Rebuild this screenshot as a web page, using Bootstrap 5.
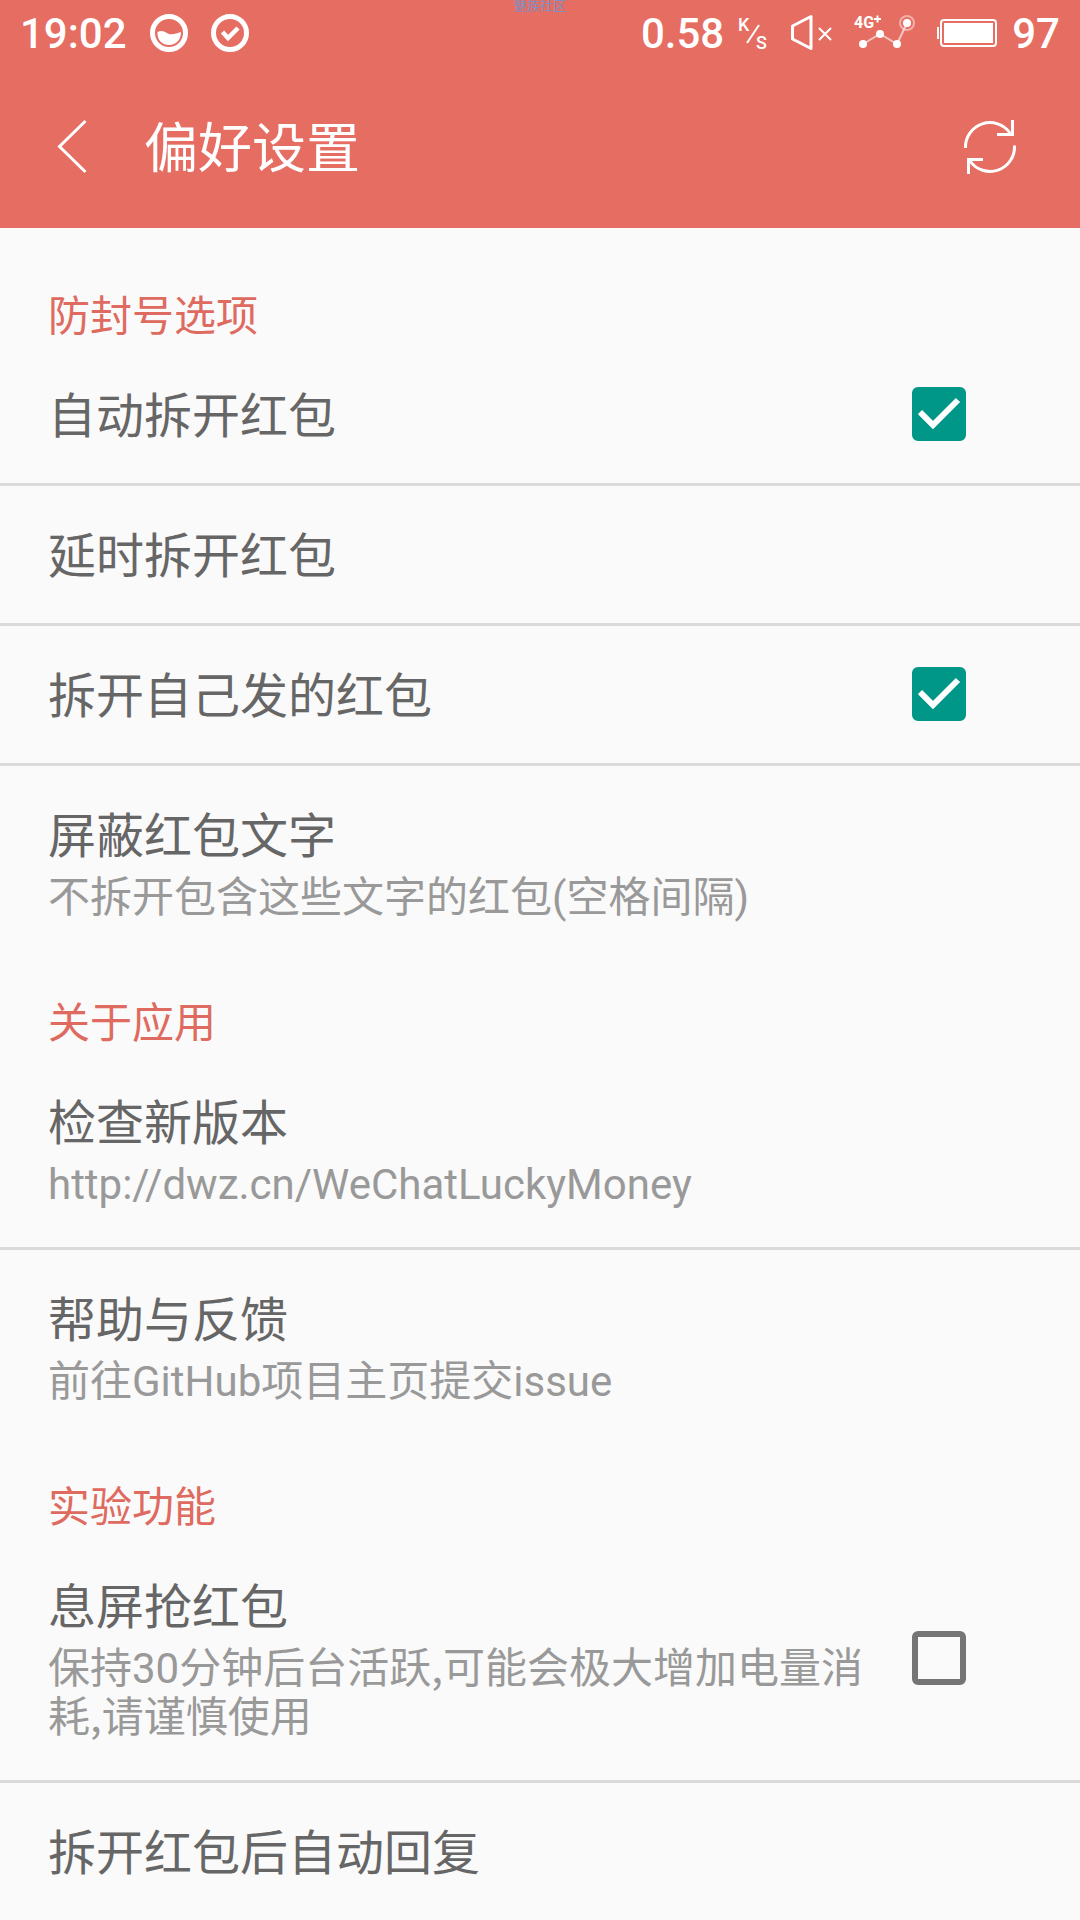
<!DOCTYPE html>
<html lang="zh-CN">
<head>
<meta charset="utf-8">
<meta name="viewport" content="width=device-width, initial-scale=1">
<title>偏好设置</title>
<link href="https://cdn.jsdelivr.net/npm/bootstrap@5.3.0/dist/css/bootstrap.min.css" rel="stylesheet">
<style>
body{font-family:Roboto,"Noto Sans CJK SC",sans-serif;background:#fafafa;color:#666}
.top-area{background:#e56d62;color:#fff}
.status-bar{height:66px;padding:0 20px;font-size:42px;line-height:64px;font-weight:500}
.status-bar span{padding-top:2px}
.status-left{gap:23px}
.speed-unit{margin-left:14px}
.mute-icon,.signal-icon{margin-left:20px}
.battery-icon{margin-left:18px}
.battery-level{margin-left:14px}
.corner-tag{font-size:13px;line-height:12px;color:#7d8fc4}
.app-bar{height:162px;padding:0 48px}
.app-title{font-size:54px;line-height:64px;font-weight:400;padding-top:5px}
.icon-btn{color:#fff;border:0;padding:0;line-height:0;background:none}
.pref-list{padding-top:25px}
.pref-heading{color:#de6a60;font-size:42px;line-height:48px;font-weight:400;padding:40px 48px 5px}
.pref-row{padding:36px 114px 38px 48px;gap:16px;color:#666}
.pref-row+.pref-row{border-top:3px solid #dadada}
.pref-text{display:block;padding-top:6px}
.pref-title{display:block;font-size:48px;line-height:57px}
.pref-note{display:block;font-size:42px;line-height:49px;color:#999;margin-top:8px}
.cjk-mark{font-family:"Noto Sans CJK SC",sans-serif;line-height:1}
.pref-row .form-check-input{width:54px;height:54px;border:6px solid #757575;border-radius:6px;background-color:transparent;margin:0}
.pref-row .form-check-input:checked{background-color:#009688;border-color:#009688;background-origin:border-box;background-size:100% 100%;background-image:url("data:image/svg+xml,%3csvg xmlns='http://www.w3.org/2000/svg' viewBox='0 0 54 54'%3e%3cpath fill='none' stroke='%23fff' stroke-width='6' d='M8 25L21 38L46 13'/%3e%3c/svg%3e")}
</style>
<script src="https://cdn.jsdelivr.net/npm/bootstrap@5.3.0/dist/js/bootstrap.bundle.min.js"></script>
</head>
<body>
<header class="top-area position-relative">
  <div class="corner-tag position-absolute top-0 start-50 translate-middle-x">魅族社区</div>
  <div class="status-bar d-flex align-items-center justify-content-between">
    <div class="status-left d-flex align-items-center">
      <span>19:02</span>
      <svg width="38" height="38" viewBox="0 0 38 38"><circle cx="19" cy="19" r="16.500" fill="none" stroke="#fff" stroke-width="5"/><path d="M7.500 18C12 15.500 15 18 19 20C23 21 27 19 31 18C31 26 26 31 19 31S7 26 7.500 18Z" fill="#fff"/></svg>
      <svg width="38" height="38" viewBox="0 0 38 38"><circle cx="19" cy="19" r="16.500" fill="none" stroke="#fff" stroke-width="5"/><path d="M11.500 18L17 24L27 14" fill="none" stroke="#fff" stroke-width="4.500"/></svg>
    </div>
    <div class="d-flex align-items-center">
      <span>0.58</span>
      <svg class="speed-unit" width="32" height="44" viewBox="0 0 32 44" fill="#fff" font-family="Roboto" font-weight="500"><text x="0" y="20" font-size="18">K</text><text x="18" y="38" font-size="18">S</text><path d="M21 14L9 32" stroke="#fff" stroke-width="2"/></svg>
      <svg class="mute-icon" width="44" height="38" viewBox="0 0 44 38" fill="none" stroke="#fff"><path d="M21 2.500V34.500L2.500 25V12Z" stroke-width="3" stroke-linejoin="round"/><path d="M29 14L41 26M41 14L29 26" stroke-width="2"/></svg>
      <svg class="signal-icon" width="64" height="40" viewBox="0 0 64 40" fill="#fff"><text x="0" y="15" font-family="Roboto" font-size="16" font-weight="700">4G</text><path d="M20 6H27M23.500 2.500V9.500" stroke="#fff" stroke-width="2"/><path d="M9 31L26 21L43 31L53 10" fill="none" stroke="#fff" stroke-opacity=".6" stroke-width="2"/><circle cx="53" cy="10" r="7" fill="none" stroke="#fff" stroke-opacity=".45" stroke-width="2"/><circle cx="9" cy="31" r="4"/><circle cx="26" cy="21" r="4"/><circle cx="43" cy="31" r="4"/><circle cx="53" cy="10" r="4"/></svg>
      <svg class="battery-icon" width="62" height="30" viewBox="0 0 62 30"><path d="M2 9V21" stroke="#fff" stroke-width="2"/><rect x="5" y="2" width="55" height="26" rx="3" fill="none" stroke="#fff" stroke-width="2"/><rect x="8" y="5" width="49" height="20" fill="#fff"/></svg>
      <span class="battery-level">97</span>
    </div>
  </div>
  <nav class="app-bar d-flex align-items-center">
    <button type="button" class="icon-btn" aria-label="返回"><svg width="48" height="60" viewBox="0 0 48 60"><path d="M37.500 4L11.500 29.500L37.500 55" fill="none" stroke="#fff" stroke-width="3"/></svg></button>
    <h1 class="app-title mb-0 ms-5">偏好设置</h1>
    <button type="button" class="icon-btn ms-auto" aria-label="刷新"><svg width="84" height="60" viewBox="0 0 84 60" fill="none" stroke="#fff" stroke-width="3"><path d="M17.500 31A24.500 24.500 0 0 1 62 16M64.500 3V17.500H49"/><path d="M66.500 28.500A24.500 24.500 0 0 1 22 44M20.500 57V42.500H35"/></svg></button>
  </nav>
</header>
<main class="pref-list">
  <section>
    <h2 class="pref-heading mb-0">防封号选项</h2>
    <label class="pref-row d-flex align-items-center"><span class="pref-text flex-grow-1"><span class="pref-title">自动拆开红包</span></span><input class="form-check-input flex-shrink-0" type="checkbox" checked></label>
    <a href="#" class="pref-row d-block text-decoration-none"><span class="pref-text"><span class="pref-title">延时拆开红包</span></span></a>
    <label class="pref-row d-flex align-items-center"><span class="pref-text flex-grow-1"><span class="pref-title">拆开自己发的红包</span></span><input class="form-check-input flex-shrink-0" type="checkbox" checked></label>
    <a href="#" class="pref-row d-block text-decoration-none"><span class="pref-text"><span class="pref-title">屏蔽红包文字</span><span class="pref-note">不拆开包含这些文字的红包(空格间隔)</span></span></a>
  </section>
  <section>
    <h2 class="pref-heading mb-0">关于应用</h2>
    <a href="#" class="pref-row d-block text-decoration-none"><span class="pref-text"><span class="pref-title">检查新版本</span><span class="pref-note">http://dwz.cn/WeChatLuckyMoney</span></span></a>
    <a href="#" class="pref-row d-block text-decoration-none"><span class="pref-text"><span class="pref-title">帮助与反馈</span><span class="pref-note">前往GitHub项目主页提交issue</span></span></a>
  </section>
  <section>
    <h2 class="pref-heading mb-0">实验功能</h2>
    <label class="pref-row d-flex align-items-center"><span class="pref-text flex-grow-1"><span class="pref-title">息屏抢红包</span><span class="pref-note">保持30分钟后台活跃<span class="cjk-mark">,</span>可能会极大增加电量消耗<span class="cjk-mark">,</span>请谨慎使用</span></span><input class="form-check-input flex-shrink-0" type="checkbox"></label>
    <a href="#" class="pref-row d-block text-decoration-none"><span class="pref-text"><span class="pref-title">拆开红包后自动回复</span></span></a>
  </section>
</main>
</body>
</html>
